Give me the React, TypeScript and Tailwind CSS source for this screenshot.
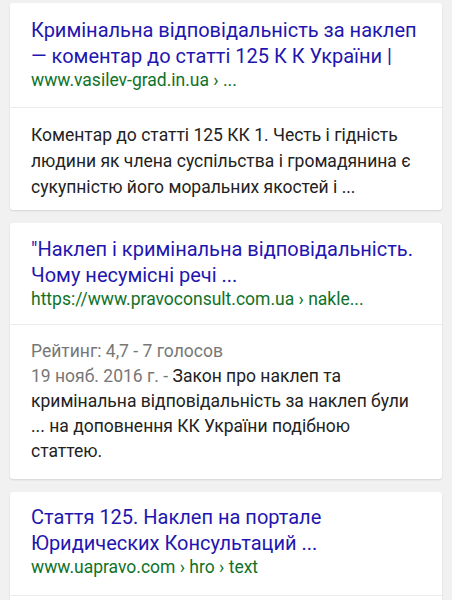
import * as React from "react"

interface Result {
    title: string
    url: string
    meta?: string
    date?: string
    snippet?: string
    headPad: string
    bodyPad: string
    bodyLeading: string
}

const results: Result[] = [
    {
        title: "Кримінальна відповідальність за наклеп — коментар до статті 125 К К України |",
        url: "www.vasilev-grad.in.ua › ...",
        snippet: "Коментар до статті 125 КК 1. Честь і гідність людини як члена суспільства і громадянина є сукупністю його моральних якостей і ...",
        headPad: "pt-[14px] pb-4",
        bodyPad: "pt-[14px] pb-[10px] pr-[22px]",
        bodyLeading: "leading-[26px]",
    },
    {
        title: "\"Наклеп і кримінальна відповідальність. Чому несумісні речі ...",
        url: "https://www.pravoconsult.com.ua › nakle...",
        meta: "Рейтинг: 4,7 - 7 голосов",
        date: "19 нояб. 2016 г. - ",
        snippet: "Закон про наклеп та кримінальна відповідальність за наклеп були ... на доповнення КК України подібною статтею.",
        headPad: "pt-[13px] pb-[14px]",
        bodyPad: "pt-[14px] pb-[15px] pr-[28px]",
        bodyLeading: "leading-[25px]",
    },
    {
        title: "Стаття 125. Наклеп на портале Юридических Консультаций ...",
        url: "www.uapravo.com › hro › text",
        headPad: "pt-[12px] pb-[17px]",
        bodyPad: "pt-[14px] pb-[12px] pr-[22px]",
        bodyLeading: "leading-[25px]",
    },
]

function ResultCard({ r }: { r: Result }) {
    return (
        <div className="bg-white rounded-[3px] shadow-[0_1px_2px_rgba(0,0,0,0.12)]">
            <div className={`${r.headPad} px-[21px]`}>
                <div className="text-[20px] leading-[26px] text-[#1f16b0]">{r.title}</div>
                <div className="text-[17.5px] leading-[22px] text-[#0e7229]">{r.url}</div>
            </div>
            <div className={`border-t border-[#ebebeb] ${r.bodyPad} pl-[21px] min-h-[20px] text-[17.5px]`}>
                {r.meta && <div className={`${r.bodyLeading} text-[#777777]`}>{r.meta}</div>}
                {r.snippet && (
                    <div className={`${r.bodyLeading} text-[#222222]`}>
                        {r.date && <span className="text-[#777777]">{r.date}</span>}
                        {r.snippet}
                    </div>
                )}
            </div>
        </div>
    )
}

export default function App() {
    return (
        <div className="w-[452px] h-[600px] overflow-hidden bg-[#f1f1f1] px-[10px] pt-[3px] flex flex-col gap-[13px] font-['Roboto',sans-serif]">
            {results.map((r, i) => (
                <ResultCard key={i} r={r} />
            ))}
        </div>
    )
}
